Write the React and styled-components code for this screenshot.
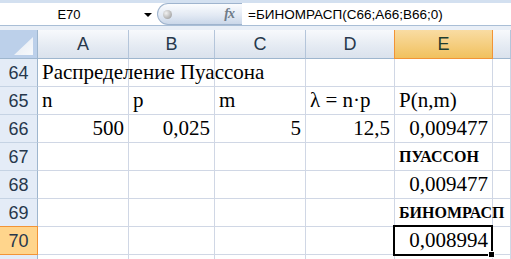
import styled, { createGlobalStyle } from 'styled-components';

const GlobalStyle = createGlobalStyle`
  html, body {
    margin: 0;
    padding: 0;
    background: #ffffff;
    overflow: hidden;
  }
`;

// последняя колонка F видна только краем, буква не попадает в кадр
const cols = [
  { id: 'A', label: 'A' },
  { id: 'B', label: 'B' },
  { id: 'C', label: 'C' },
  { id: 'D', label: 'D' },
  { id: 'E', label: 'E' },
  { id: 'F', label: '' },
];

const rows = [
  { n: 64, cells: [{ t: 'Распределение Пуассона', span: true }] },
  { n: 65, cells: [{ t: 'n' }, { t: 'p' }, { t: 'm' }, { t: 'λ = n·p' }, { t: 'P(n,m)' }] },
  {
    n: 66,
    cells: [
      { t: '500', right: true },
      { t: '0,025', right: true },
      { t: '5', right: true },
      { t: '12,5', right: true },
      { t: '0,009477', right: true },
    ],
  },
  { n: 67, cells: [{}, {}, {}, {}, { t: 'ПУАССОН', bold: true }] },
  { n: 68, cells: [{}, {}, {}, {}, { t: '0,009477', right: true }] },
  { n: 69, cells: [{}, {}, {}, {}, { t: 'БИНОМРАСП', bold: true }] },
  { n: 70, cells: [{}, {}, {}, {}, { t: '0,008994', right: true, selected: true }] },
  { n: 71, cells: [], hidden: true },
];

const App = () => {
  return (
    <>
      <GlobalStyle />
      <Window>
        <FormulaArea>
          <FormulaBar>
            <NameBox>
              <NameText>E70</NameText>
              <DropArrow />
            </NameBox>
            <FxButton>
              <Knob />
              <FxLabel>fx</FxLabel>
            </FxButton>
            <FormulaText>=БИНОМРАСП(C66;A66;B66;0)</FormulaText>
          </FormulaBar>
        </FormulaArea>
        <Grid>
          <Corner />
          {cols.map((c) => (
            <ColHead key={c.id} $active={c.id === 'E'}>
              {c.label}
            </ColHead>
          ))}
          {rows.map((r) => (
            <Row key={r.n} r={r} />
          ))}
        </Grid>
      </Window>
    </>
  );
};

const Row = ({ r }) => {
  const cells = [];
  for (let i = 0; i < 6; i++) {
    const c = r.cells[i] || {};
    cells.push(
      <Cell key={i} $right={c.right} $overflow={c.span || c.bold} $selected={c.selected}>
        {c.t ? <CellText $bold={c.bold}>{c.t}</CellText> : null}
        {c.selected ? (
          <Selection>
            <FillHandle />
          </Selection>
        ) : null}
      </Cell>
    );
  }
  return (
    <>
      <RowHead $active={r.n === 70}>{r.hidden ? '' : r.n}</RowHead>
      {cells}
    </>
  );
};

const Window = styled.div`
  width: 511px;
  height: 259px;
  overflow: hidden;
  font-family: 'Liberation Sans', Arial, sans-serif;
`;

const FormulaArea = styled.div`
  height: 30px;
  box-sizing: border-box;
  padding-top: 3px;
  background: linear-gradient(#d3e0f0 0, #d3e0f0 3px, #e9eff7 3px);
`;

const FormulaBar = styled.div`
  height: 22px;
  display: flex;
  align-items: stretch;
  background: #ffffff;
  border-bottom: 1px solid #a9bed6;
`;

const NameBox = styled.div`
  width: 157px;
  display: flex;
  align-items: center;
`;

const NameText = styled.div`
  width: 138px;
  text-align: center;
  font-size: 13px;
  color: #000;
`;

const DropArrow = styled.div`
  width: 0;
  height: 0;
  border-left: 4px solid transparent;
  border-right: 4px solid transparent;
  border-top: 4px solid #000;
  margin-left: 6px;
  margin-top: 2px;
`;

const FxButton = styled.div`
  width: 85px;
  box-sizing: border-box;
  display: flex;
  align-items: center;
  justify-content: space-between;
  padding: 0 8px 0 5px;
  border: 1px solid #9fb4ce;
  border-right: none;
  border-radius: 11px 0 0 11px;
  background: linear-gradient(#fbfcfe, #e3eaf4 55%, #cad7e9);
`;

const Knob = styled.div`
  width: 9px;
  height: 9px;
  border-radius: 50%;
  background: radial-gradient(circle at 35% 35%, #f2f2f2, #a8a8a8 75%);
`;

const FxLabel = styled.div`
  font-family: 'Liberation Serif', 'Times New Roman', serif;
  font-style: italic;
  font-weight: bold;
  font-size: 14px;
  color: #6f7b88;
  letter-spacing: -1px;
`;

const FormulaText = styled.div`
  flex: 1;
  display: flex;
  align-items: center;
  padding-left: 6px;
  font-size: 13.5px;
  color: #000;
  white-space: nowrap;
`;

const Grid = styled.div`
  display: grid;
  grid-template-columns: 38px 91px 86px 91px 89px 98px 1fr;
  grid-template-rows: 29px repeat(8, 28px);
`;

const Corner = styled.div`
  position: relative;
  box-sizing: border-box;
  background: #bcd0ea;
  border-right: 1px solid #9eb6ce;
  border-bottom: 1px solid #9eb6ce;
  &::after {
    content: '';
    position: absolute;
    right: 4px;
    bottom: 3px;
    width: 19px;
    height: 18px;
    background: linear-gradient(135deg, #e4eaf2, #f7f9fc);
    clip-path: polygon(100% 0, 100% 100%, 0 100%);
  }
`;

const ColHead = styled.div`
  box-sizing: border-box;
  display: flex;
  align-items: center;
  justify-content: center;
  font-size: 18px;
  color: ${(p) => (p.$active ? '#1f3d2f' : '#27384c')};
  background: ${(p) =>
    p.$active ? 'linear-gradient(#f9dca3, #f1c15e)' : 'linear-gradient(#f7f9fc, #e4eaf2 60%, #dae2ed)'};
  border-right: 1px solid ${(p) => (p.$active ? '#f29436' : '#b4c5da')};
  border-bottom: 1px solid ${(p) => (p.$active ? '#f29436' : '#9eb6ce')};
  border-left: ${(p) => (p.$active ? '1px solid #f29436' : 'none')};
  margin-left: ${(p) => (p.$active ? '-1px' : '0')};
  padding-top: 1px;
`;

const RowHead = styled.div`
  box-sizing: border-box;
  display: flex;
  align-items: center;
  justify-content: center;
  font-size: 18px;
  color: #27384c;
  background: ${(p) => (p.$active ? '#ffd58c' : '#e4ecf7')};
  border-right: 1px solid ${(p) => (p.$active ? '#f29436' : '#9eb6ce')};
  border-bottom: 1px solid ${(p) => (p.$active ? '#f29436' : '#c5d3e4')};
  border-top: ${(p) => (p.$active ? '1px solid #f29436' : 'none')};
  margin-top: ${(p) => (p.$active ? '-1px' : '0')};
  padding-top: 1px;
`;

const Cell = styled.div`
  position: relative;
  box-sizing: border-box;
  display: flex;
  align-items: flex-end;
  justify-content: ${(p) => (p.$right ? 'flex-end' : 'flex-start')};
  padding: 0 4px 3px 4px;
  border-right: 1px solid #d0d7e5;
  border-bottom: 1px solid #d0d7e5;
  white-space: nowrap;
  z-index: ${(p) => (p.$overflow || p.$selected ? 2 : 1)};
  font-family: 'Liberation Serif', 'Times New Roman', serif;
  color: #000;
`;

const CellText = styled.span`
  font-size: ${(p) => (p.$bold ? '16px' : '21px')};
  font-weight: ${(p) => (p.$bold ? 'bold' : 'normal')};
  line-height: 1;
  margin-bottom: ${(p) => (p.$bold ? '2px' : '0')};
`;

const Selection = styled.div`
  position: absolute;
  left: -2px;
  top: -2px;
  right: -1px;
  bottom: -2px;
  border: 2px solid #000;
  pointer-events: none;
`;

const FillHandle = styled.div`
  position: absolute;
  right: -4px;
  bottom: -4px;
  width: 5px;
  height: 5px;
  background: #000;
  border: 1px solid #fff;
`;

export default App;
